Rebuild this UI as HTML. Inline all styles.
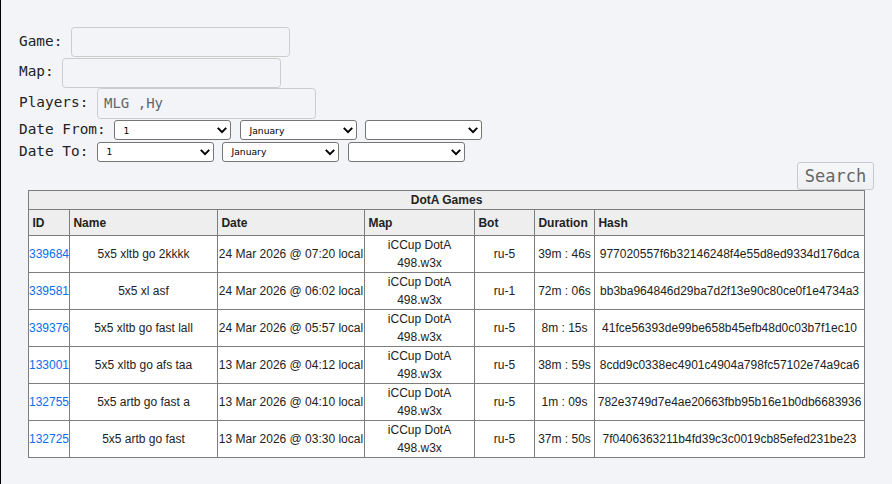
<!DOCTYPE html>
<html>
<head>
<meta charset="utf-8">
<title>DotA Games</title>
<style>
html,body{margin:0;padding:0;}
body{width:892px;height:484px;position:relative;overflow:hidden;background:#f3f4f8;font-family:"DejaVu Sans Mono","Liberation Mono",monospace;font-size:14.4px;color:#222;border-left:1px solid #000;box-sizing:border-box;}
form{margin:0;}
.lbl{position:absolute;left:18px;white-space:pre;line-height:18px;}
.inp{position:absolute;box-sizing:border-box;width:219px;height:30px;border:1px solid #cccccc;border-radius:3.5px;background:#f3f4f8;font-family:"DejaVu Sans Mono","Liberation Mono",monospace;font-size:14px;color:#666;padding:0 0 0 6px;line-height:28px;}
.sel{position:absolute;box-sizing:border-box;width:117px;height:20px;border:1px solid #767676;border-radius:3px;background:#fff;font-family:"DejaVu Sans",sans-serif;font-size:9.2px;color:#000;line-height:18px;padding-left:8.5px;}
.sel svg{position:absolute;right:3px;top:5.6px;}
.btn{margin:0;padding:0;cursor:pointer;position:absolute;left:796px;top:162px;box-sizing:border-box;width:77px;height:28px;border:1px solid #c6cacf;border-radius:3px;background:linear-gradient(#f6f7f9,#eff0f2);font-family:"DejaVu Sans Mono","Liberation Mono",monospace;font-size:17px;color:#666;text-align:center;line-height:26px;}
table{position:absolute;left:27px;top:190px;border-collapse:separate;border-spacing:0;table-layout:fixed;width:837px;border-right:1px solid #7d7d7d;border-bottom:1px solid #7d7d7d;font-family:"Liberation Sans",sans-serif;font-size:12px;color:#222;}
th,td{border-left:1px solid #7d7d7d;border-top:1px solid #7d7d7d;padding:0;box-sizing:border-box;overflow:hidden;white-space:nowrap;}
th{background:#eee;font-weight:bold;text-align:left;padding-left:3.4px;height:26px;}
th.cap{text-align:center;height:19px;padding:0;}
td{background:#fff;text-align:center;height:37px;line-height:18px;}
td.map{white-space:normal;}
a{color:#0a6ef0;text-decoration:none;}
</style>
</head>
<body>
<form>
<div class="lbl" style="top:32px">Game:</div><div class="inp" style="left:70px;top:27px"></div>
<div class="lbl" style="top:62px">Map:</div><div class="inp" style="left:61px;top:58px"></div>
<div class="lbl" style="top:93px">Players:</div><div class="inp" style="left:96px;top:88px;height:31px">MLG ,Hy</div>
<div class="lbl" style="top:120px">Date From:</div>
<div class="sel" style="left:113px;top:120px;line-height:20px">1<svg width="10" height="7" viewBox="0 0 10 7"><path d="M0.8 0.9 L5 5.1 L9.2 0.9" fill="none" stroke="#000" stroke-width="2"/></svg></div>
<div class="sel" style="left:239px;top:120px;line-height:20px">January<svg width="10" height="7" viewBox="0 0 10 7"><path d="M0.8 0.9 L5 5.1 L9.2 0.9" fill="none" stroke="#000" stroke-width="2"/></svg></div>
<div class="sel" style="left:364px;top:120px"><svg width="10" height="7" viewBox="0 0 10 7"><path d="M0.8 0.9 L5 5.1 L9.2 0.9" fill="none" stroke="#000" stroke-width="2"/></svg></div>
<div class="lbl" style="top:142px">Date To:</div>
<div class="sel" style="left:96px;top:142px">1<svg width="10" height="7" viewBox="0 0 10 7"><path d="M0.8 0.9 L5 5.1 L9.2 0.9" fill="none" stroke="#000" stroke-width="2"/></svg></div>
<div class="sel" style="left:221px;top:142px">January<svg width="10" height="7" viewBox="0 0 10 7"><path d="M0.8 0.9 L5 5.1 L9.2 0.9" fill="none" stroke="#000" stroke-width="2"/></svg></div>
<div class="sel" style="left:347px;top:142px"><svg width="10" height="7" viewBox="0 0 10 7"><path d="M0.8 0.9 L5 5.1 L9.2 0.9" fill="none" stroke="#000" stroke-width="2"/></svg></div>
<button type="button" class="btn">Search</button>
</form>
<table>
<colgroup><col style="width:41px"><col style="width:148px"><col style="width:147px"><col style="width:110px"><col style="width:60px"><col style="width:60px"><col style="width:270px"></colgroup>
<tr><th class="cap" colspan="7">DotA Games</th></tr>
<tr><th>ID</th><th>Name</th><th>Date</th><th>Map</th><th>Bot</th><th>Duration</th><th>Hash</th></tr>
<tr><td><a>339684</a></td><td>5x5 xltb go 2kkkk</td><td>24 Mar 2026 @ 07:20 local</td><td class="map">iCCup DotA 498.w3x</td><td>ru-5</td><td>39m : 46s</td><td>977020557f6b32146248f4e55d8ed9334d176dca</td></tr>
<tr><td><a>339581</a></td><td>5x5 xl asf</td><td>24 Mar 2026 @ 06:02 local</td><td class="map">iCCup DotA 498.w3x</td><td>ru-1</td><td>72m : 06s</td><td>bb3ba964846d29ba7d2f13e90c80ce0f1e4734a3</td></tr>
<tr><td><a>339376</a></td><td>5x5 xltb go fast lall</td><td>24 Mar 2026 @ 05:57 local</td><td class="map">iCCup DotA 498.w3x</td><td>ru-5</td><td>8m : 15s</td><td>41fce56393de99be658b45efb48d0c03b7f1ec10</td></tr>
<tr><td><a>133001</a></td><td>5x5 xltb go afs taa</td><td>13 Mar 2026 @ 04:12 local</td><td class="map">iCCup DotA 498.w3x</td><td>ru-5</td><td>38m : 59s</td><td>8cdd9c0338ec4901c4904a798fc57102e74a9ca6</td></tr>
<tr><td><a>132755</a></td><td>5x5 artb go fast a</td><td>13 Mar 2026 @ 04:10 local</td><td class="map">iCCup DotA 498.w3x</td><td>ru-5</td><td>1m : 09s</td><td>782e3749d7e4ae20663fbb95b16e1b0db6683936</td></tr>
<tr><td><a>132725</a></td><td>5x5 artb go fast</td><td>13 Mar 2026 @ 03:30 local</td><td class="map">iCCup DotA 498.w3x</td><td>ru-5</td><td>37m : 50s</td><td>7f0406363211b4fd39c3c0019cb85efed231be23</td></tr>
</table>
</body>
</html>
